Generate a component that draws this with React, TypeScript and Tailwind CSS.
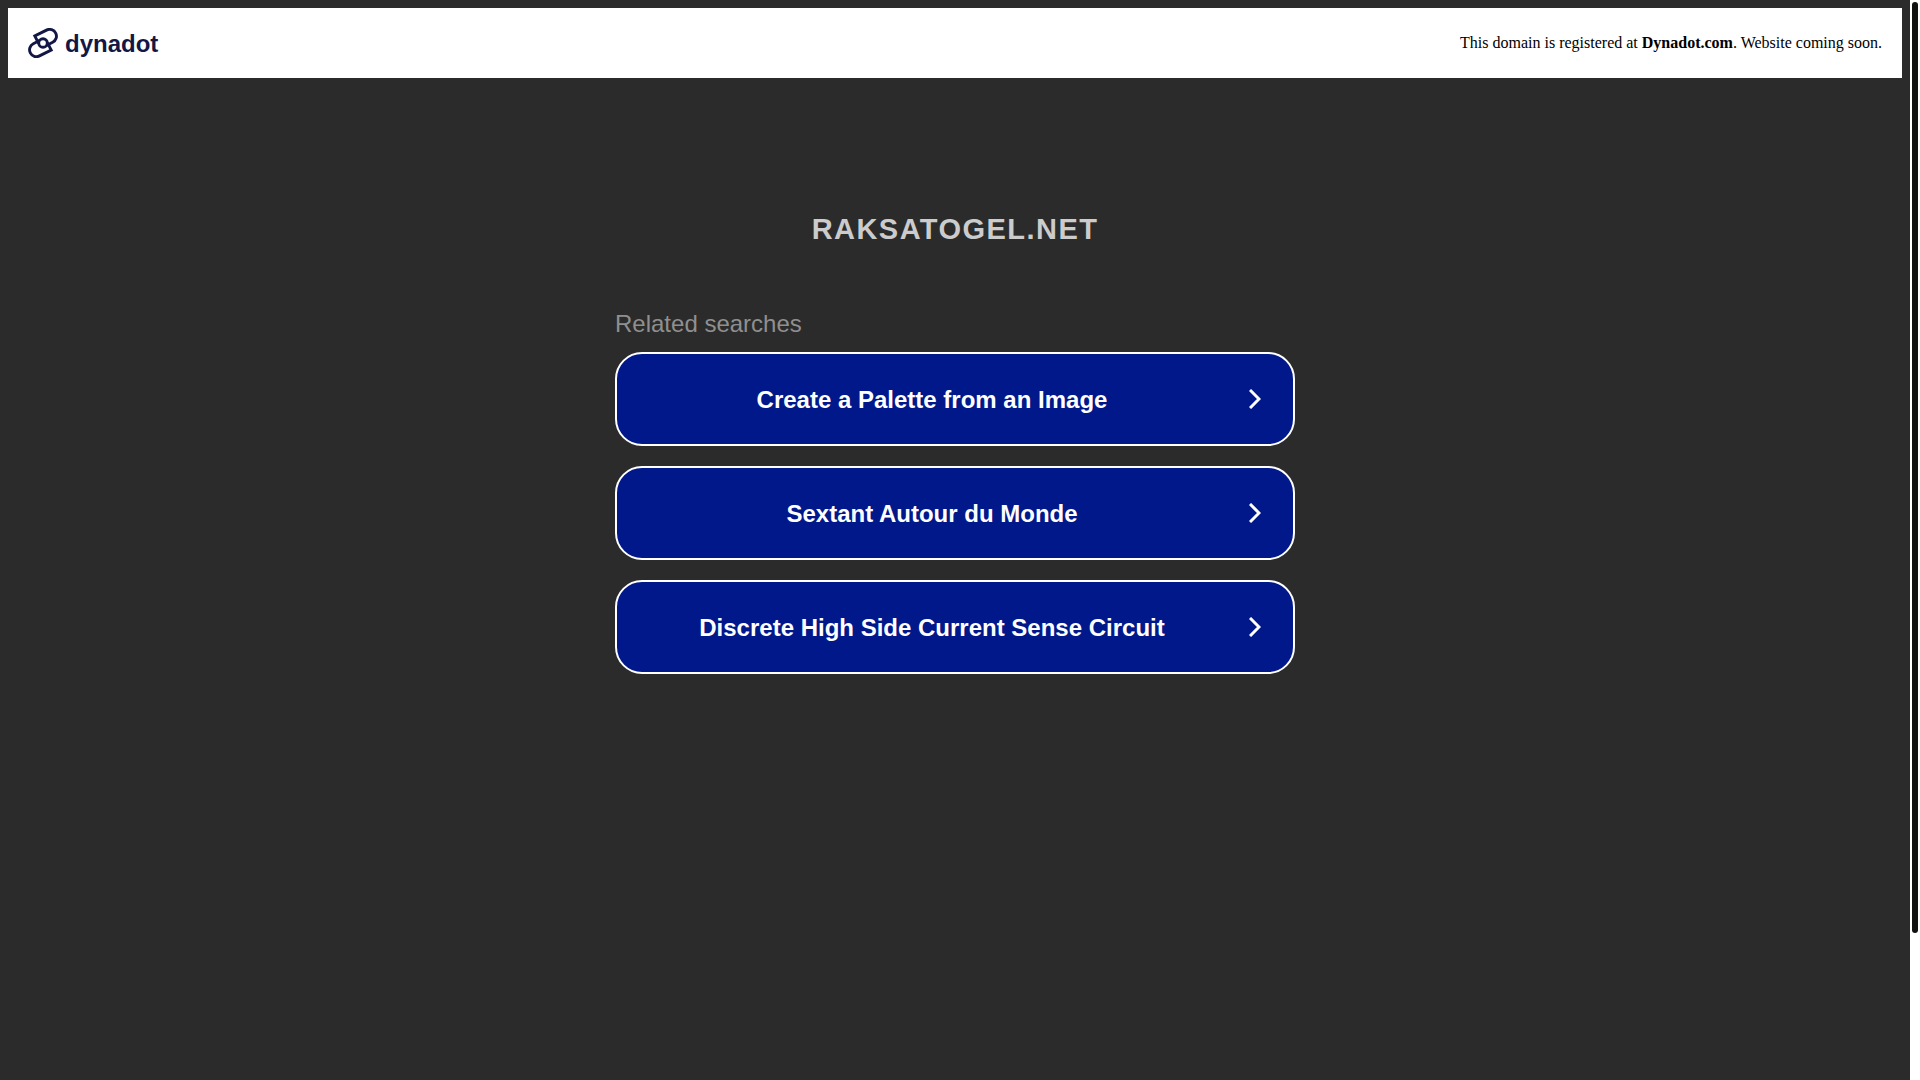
import React from "react";

const searches = [
  "Create a Palette from an Image",
  "Sextant Autour du Monde",
  "Discrete High Side Current Sense Circuit",
];

const LogoMark: React.FC = () => (
  <svg
    className="h-[30px] w-[30px]"
    viewBox="0 0 30 30"
    fill="none"
    stroke="currentColor"
    strokeWidth="2.9"
    aria-hidden="true"
  >
    <path d="M10.6 15.4 6.8 8 18.5 2.1A6.8 6.8 0 0 1 24.7 14.3L18.4 17.5" />
    <path d="M19.4 14.6 23.2 22 11.5 27.9A6.8 6.8 0 0 1 5.3 15.7L11.6 12.5" />
    <circle cx="15" cy="15" r="4.3" />
  </svg>
);

const ChevronRight: React.FC = () => (
  <svg
    className="h-5 w-3"
    viewBox="0 0 12 20"
    fill="none"
    stroke="currentColor"
    strokeWidth="3"
    aria-hidden="true"
  >
    <path d="M1 1 10 10 1 19" />
  </svg>
);

const Header: React.FC = () => (
  <header className="flex h-[70px] items-center justify-between bg-white px-5">
    <a href="#" className="flex items-center gap-[7px] text-[#131745]">
      <LogoMark />
      <span className="pt-[2px] font-['Liberation_Sans',Arial,sans-serif] text-2xl leading-[30px] font-bold">
        dynadot
      </span>
    </a>
    <p className="font-['Liberation_Serif','Times_New_Roman',serif] text-base text-black">
      This domain is registered at{" "}
      <a href="#" className="font-bold">
        Dynadot.com
      </a>
      . Website coming soon.
    </p>
  </header>
);

const SearchLink: React.FC<{ label: string }> = ({ label }) => (
  <a
    href="#"
    className="flex h-[94px] items-center gap-[2px] rounded-[27px] border-2 border-white bg-[#00188a] pr-8 text-white"
  >
    <span className="flex-1 pt-[2px] text-center text-2xl font-bold">
      {label}
    </span>
    <ChevronRight />
  </a>
);

export default function App() {
  return (
    <div className="flex min-h-screen bg-[#2b2b2b] font-['Liberation_Sans',Arial,sans-serif]">
      <div className="flex-1 p-2">
        <Header />
        <main className="mx-auto max-w-[680px] pt-[130px]">
          <h1 className="text-center text-[29px] leading-[42px] font-bold tracking-wider text-[#cccccc]">
            RAKSATOGEL.NET
          </h1>
          <h2 className="pt-[58px] text-2xl text-[#8f8f8f]">Related searches</h2>
          <ul className="flex flex-col gap-5 pt-3">
            {searches.map((label) => (
              <li key={label}>
                <SearchLink label={label} />
              </li>
            ))}
          </ul>
        </main>
      </div>
      {/* scroll track */}
      <div className="sticky top-0 h-screen w-[10px] bg-white p-[2px]">
        <div className="h-[86.5%] rounded-full bg-[#111111]" />
      </div>
    </div>
  );
}
